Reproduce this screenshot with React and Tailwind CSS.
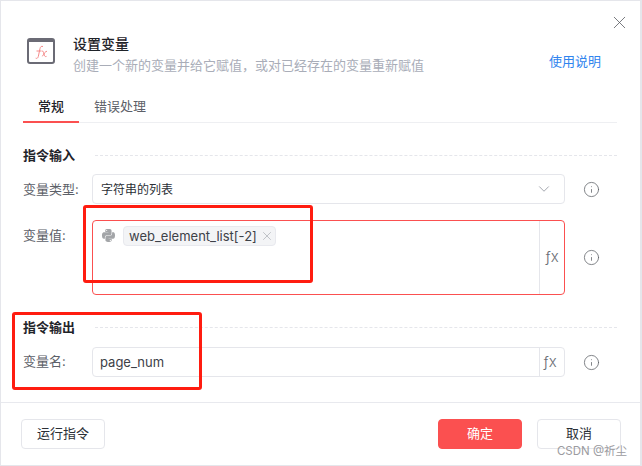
import React from "react";
import { ChevronDown, Info, X } from "lucide-react";
import { FaPython } from "react-icons/fa";

const font = "font-['Inter','Noto_Sans_CJK_SC',sans-serif]";

function Fx({ className = "" }) {
  return (
    <div className={`w-[25px] shrink-0 self-stretch flex items-center justify-center border-l border-[#e5e6eb] text-[#6b6f76] text-[15px] font-light ${className}`}>
      ƒx
    </div>
  );
}

function InfoIcon() {
  return (
    <div className="w-[52px] shrink-0 flex items-center justify-center">
      <Info size={17} strokeWidth={1.1} className="text-[#5f6368]" />
    </div>
  );
}

function SectionTitle({ children }) {
  return (
    <div className="flex items-center h-5">
      <span className="w-[72px] shrink-0 pt-[1px] text-[13px] font-semibold text-[#1f2329]">{children}</span>
      <div className="flex-1 border-t border-dashed border-[#e5e6eb] mr-[23px]" />
    </div>
  );
}

function Btn({ className = "", children }) {
  return (
    <button className={`w-[84px] h-[30px] rounded border border-[#e5e6eb] text-[13px] text-[#2b2f36] flex items-center justify-center ${className}`}>
      {children}
    </button>
  );
}

export default function App() {
  return (
    <div className={`${font} relative w-[642px] h-[466px] bg-white border border-[#e5e6eb] border-r-[2px] flex flex-col overflow-hidden`}>
      <div className="absolute left-[608px] top-[11px] text-[#55585e]">
        <X size={21} strokeWidth={0.9} />
      </div>

      <div className="flex pt-[37px] pl-[26px] pr-[39px] h-[90px]">
        <svg width="28" height="26" viewBox="0 0 28 26" className="shrink-0">
          <rect x="1" y="1" width="26" height="24" rx="2" fill="#fff" stroke="#6b6b75" strokeWidth="2" />
          <rect x="1" y="1" width="26" height="3" fill="#6b6b75" />
          <path d="M16 8.5c-1.6-.6-2.6.2-3 2l-1.7 8c-.4 1.6-1.3 2.2-2.6 1.7M9.5 13h5M15 13c1.3 0 1.5 1 2 3s1 3 2.5 2.4M20 13.3c-1.5-.3-3 2.3-4.6 5" fill="none" stroke="#f58a8a" strokeWidth="1" />
        </svg>
        <div className="ml-[18px] flex-1">
          <div className="text-[14px] leading-[16px] font-medium text-[#1f2329] mt-[-2px]">设置变量</div>
          <div className="text-[13px] leading-[18px] text-[#a9adb8] mt-[4px]">创建一个新的变量并给它赋值，或对已经存在的变量重新赋值</div>
        </div>
        <div className="text-[13px] leading-[18px] text-[#2f84ee] mt-[14px]">使用说明</div>
      </div>

      <div className="ml-[22px] mr-[23px] h-[32px] border-b border-[#eeeff2] flex text-[13px]">
        <div className="w-[56px] h-[32px] border-b-2 border-[#fb5050] flex justify-center pt-[6px] font-medium text-[#1f2329]">常规</div>
        <div className="ml-[15px] pt-[6px] text-[#5c6068]">错误处理</div>
      </div>

      <div className="flex flex-col pl-[22px] pt-[22px] h-[280px] border-b border-[#e8e9ee]">
        <SectionTitle>指令输入</SectionTitle>
        <div className="flex items-center mt-[9px] h-[30px]">
          <span className="w-[69px] shrink-0 pt-[1px] text-[13px] text-[#5c6068]">变量类型:</span>
          <div className="w-[473px] h-[30px] rounded border border-[#e5e6eb] flex items-center justify-between pl-[8px] pr-[11px] text-[12px] text-[#2b2f36]">
            <span className="pt-[1px]">字符串的列表</span>
            <ChevronDown size={18} strokeWidth={1} className="text-[#858a94]" />
          </div>
          <InfoIcon />
        </div>
        <div className="flex mt-[16px] h-[75px]">
          <span className="w-[69px] shrink-0 text-[13px] text-[#5c6068] pt-[6px]">变量值:</span>
          <div className="w-[473px] h-[75px] rounded border border-[#fb5050] flex">
            <div className="flex-1 flex items-start pl-[8px] pt-[5px]">
              <FaPython size={15} className="text-[#a3a5a8] mt-[2px]" />
              <div className="ml-[7px] w-[153px] h-[20px] rounded bg-[#f3f4f6] border border-[#e8e9ee] flex items-center pl-[5px] text-[13px] text-[#3d4148]">
                <span className="pt-[1px]">web_element_list[-2]</span>
                <X size={14} strokeWidth={1} className="ml-[3px] text-[#9a9ea6]" />
              </div>
            </div>
            <Fx />
          </div>
          <InfoIcon />
        </div>
        <div className="mt-[22px]"><SectionTitle>指令输出</SectionTitle></div>
        <div className="flex items-center mt-[10px] h-[30px]">
          <span className="w-[69px] shrink-0 text-[13px] text-[#5c6068]">变量名:</span>
          <div className="w-[473px] h-[30px] rounded border border-[#e5e6eb] flex items-center">
            <div className="flex-1 pl-[7px] pt-[2px] text-[13px] text-[#3d4148]">page_num</div>
            <Fx className="pr-[4px]" />
          </div>
          <InfoIcon />
        </div>
      </div>

      <div className="flex-1 flex pl-[20px] pr-[19px] pt-[16px]">
        <Btn>运行指令</Btn>
        <Btn className="ml-auto !border-[#fb5050] bg-[#fb5050] !text-white">确定</Btn>
        <Btn className="ml-[15px]">取消</Btn>
      </div>

      <div className="absolute right-[13px] top-[443px] text-[11.5px] leading-[14px] text-[#9b9ba0]">CSDN @祈尘</div>

      <div className="absolute left-[82px] top-[204px] w-[230px] h-[78px] border-[3px] border-[#ff1c10] rounded-[3px]" />
      <div className="absolute left-[11px] top-[311px] w-[190px] h-[78px] border-[3px] border-[#ff1c10] rounded-[3px]" />
    </div>
  );
}
